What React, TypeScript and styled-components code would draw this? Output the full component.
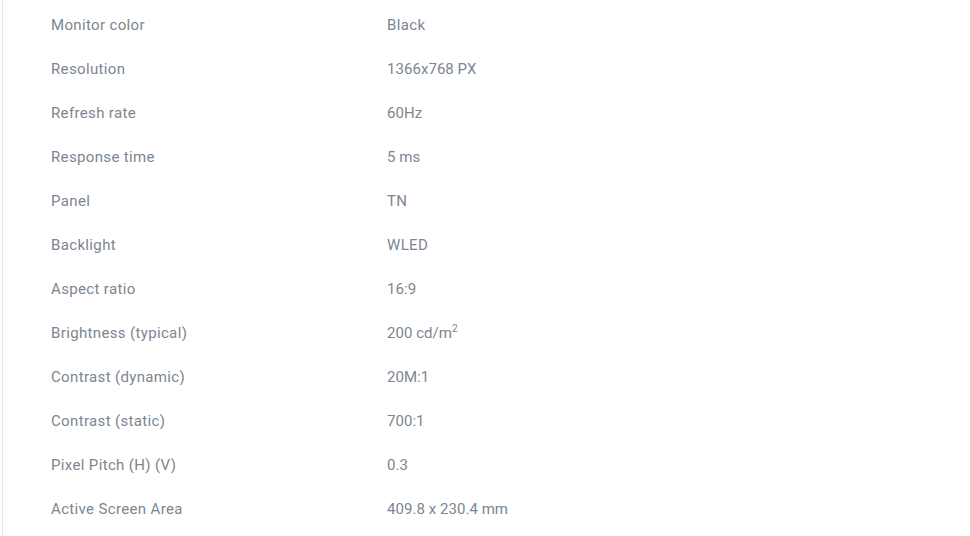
import React from "react";
import styled, { createGlobalStyle } from "styled-components";

const Global = createGlobalStyle`
  html, body { margin: 0; padding: 0; background: #fff; }
  body { font-family: Roboto, "Liberation Sans", sans-serif; }
`;

const Panel = styled.div`
  margin-left: 2px;
  border-left: 1px solid #e6e6e6;
  padding: 14px 0 0 48px;
  height: 536px;
  box-sizing: border-box;
`;

const Table = styled.div`
  display: grid;
  grid-template-columns: 336px 1fr;
  grid-auto-rows: 44px;
`;

const Cell = styled.div<{ $numeric?: boolean }>`
  font-size: 15px;
  line-height: 22px;
  color: #7b8692;
  white-space: nowrap;
  letter-spacing: ${(p) => (p.$numeric ? "0.05px" : "0.35px")};
`;

const Sup = styled.sup`
  font-size: 10px;
  line-height: 0;
  vertical-align: 6px;
`;

const rows: [string, React.ReactNode, boolean][] = [
  ["Monitor color", "Black", false],
  ["Resolution", "1366x768 PX", true],
  ["Refresh rate", "60Hz", true],
  ["Response time", "5 ms", true],
  ["Panel", "TN", false],
  ["Backlight", "WLED", false],
  ["Aspect ratio", "16:9", true],
  ["Brightness (typical)", <>200 cd/m<Sup>2</Sup></>, true],
  ["Contrast (dynamic)", "20M:1", true],
  ["Contrast (static)", "700:1", true],
  ["Pixel Pitch (H) (V)", "0.3", true],
  ["Active Screen Area", "409.8 x 230.4 mm", true],
];

export default function App() {
  return (
    <>
      <Global />
      <Panel>
        <Table>
          {rows.map(([k, v, n]) => (
            <React.Fragment key={k}>
              <Cell>{k}</Cell>
              <Cell $numeric={n}>{v}</Cell>
            </React.Fragment>
          ))}
        </Table>
      </Panel>
    </>
  );
}
